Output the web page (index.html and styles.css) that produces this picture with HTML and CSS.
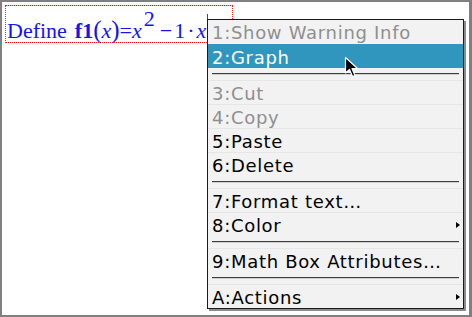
FILE: index.html
```html
<!DOCTYPE html>
<html lang="en">
<head>
    <meta charset="UTF-8">
    <title>Notes - context menu</title>
    <link rel="stylesheet" href="styles.css">
</head>
<body>
    <div class="screen">
        <div class="mathbox"><span class="kw">Define</span><b class="fn">f1</b><span class="paren">(</span><i>x</i><span class="paren">)</span>=<i>x</i><span class="pow">2</span><span class="op">−</span>1<span class="dot">·</span><i>x</i><span class="caret"></span></div>

        <div class="menu">
            <div class="item disabled">1:Show Warning Info</div>
            <div class="item active">2:Graph</div>
            <div class="sep"></div>
            <div class="item disabled">3:Cut</div>
            <div class="item disabled">4:Copy</div>
            <div class="item">5:Paste</div>
            <div class="item">6:Delete</div>
            <div class="sep"></div>
            <div class="item">7:Format text…</div>
            <div class="item sub">8:Color</div>
            <div class="sep"></div>
            <div class="item">9:Math Box Attributes…</div>
            <div class="sep"></div>
            <div class="item sub">A:Actions</div>
        </div>

        <svg class="pointer" width="16" height="24" viewBox="0 0 16 24">
            <path d="M1.5 1.5 L1.5 17 L5.5 13.5 L8.5 20.5 L11 19.5 L8 12.5 L13.5 12.5 Z" fill="#000" stroke="#fff" stroke-width="1.2" stroke-linejoin="round"/>
        </svg>
    </div>
</body>
</html>
```

FILE: styles.css
```css
body {
    margin: 0;
    background: #808080;
}
.screen {
    position: relative;
    width: 472px;
    height: 317px;
    box-sizing: border-box;
    border: 2px solid #808080;
    border-right-width: 3px;
    background: #fff;
    overflow: hidden;
}
.mathbox {
    margin: 3px 0 0 3px;
    width: 225px;
    height: 29px;
    padding: 7px 0 0 1px;
    border: 1px dotted #ff2020;
    font-family: "Liberation Serif", serif;
    font-size: 22px;
    line-height: 36px;
    color: #1414f0;
    white-space: nowrap;
}
.mathbox .kw {
    margin-right: 8px;
}
.mathbox .fn {
    font-weight: bold;
}
.mathbox .paren {
    font-size: 25px;
    line-height: 0;
}
.mathbox .pow {
    display: inline-block;
    vertical-align: 12px;
    line-height: 0;
    margin: 0 4px 0 2px;
}
.mathbox .op {
    display: inline-block;
    margin: 0 2px 0 1px;
}
.mathbox .dot {
    margin: 0 2px;
}
.caret {
    display: inline-block;
    width: 0;
    height: 24px;
    border-left: 1px solid #ff0000;
    margin-left: 1px;
    vertical-align: 0;
}
.menu {
    position: absolute;
    left: 205px;
    top: 17px;
    width: 255px;
    border: 1px solid #1a1a1a;
    background: #f2f2f2;
    box-shadow: 2px 2px 0 #8c8c8c;
    font-family: "DejaVu Sans", sans-serif;
    font-size: 18px;
    letter-spacing: 0.7px;
}
.item {
    position: relative;
    height: 24px;
    box-sizing: border-box;
    padding-left: 4px;
    line-height: 25px;
    color: #000;
    border-top: 1px solid #e6e6e6;
}
.item:first-child {
    border-top: none;
}
.disabled {
    color: #8f8f8f;
}
.active {
    background: #3096be;
    color: #fff;
    border-top-color: #3096be;
}
.sub::after {
    content: "";
    position: absolute;
    right: 3px;
    top: 9px;
    border-left: 4px solid #000;
    border-top: 3px solid transparent;
    border-bottom: 3px solid transparent;
}
.sep {
    height: 12px;
    box-sizing: border-box;
    padding-top: 5px;
}
.sep::before {
    content: "";
    display: block;
    margin: 0 4px;
    height: 1px;
    background: #3c3c3c;
    border-bottom: 1px solid #d0d0d0;
}
.pointer {
    position: absolute;
    left: 342px;
    top: 54px;
}
```
